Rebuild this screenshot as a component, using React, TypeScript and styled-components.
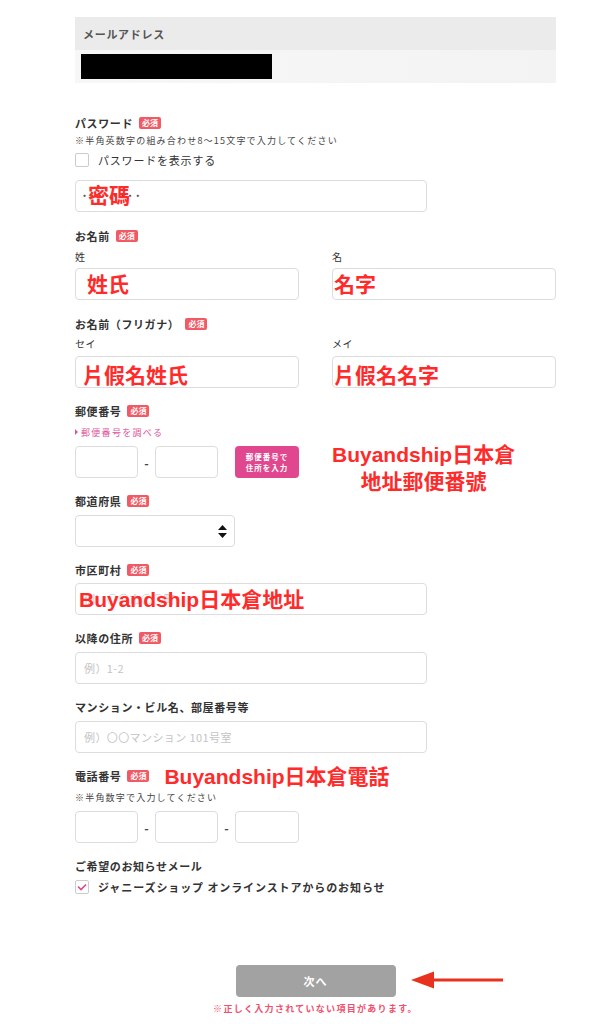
import styled, { createGlobalStyle } from 'styled-components';

const Global = createGlobalStyle`
    body {
        margin: 0;
        background: #ffffff;
        font-family: "Noto Sans CJK JP", "Noto Sans", sans-serif;
        color: #333333;
    }
    * { box-sizing: border-box; }
`;

const Page = styled.div`
    width: 481px;
    margin-left: 75px;
    padding: 17px 0 12px;
`;
const MailHead = styled.div`
    height: 33px;
    padding-left: 8px;
    display: flex;
    align-items: center;
    background: #ebebeb;
    font-size: 11px;
    font-weight: bold;
    letter-spacing: 0.7px;
    color: #555555;
`;
const MailBody = styled.div`
    height: 33px;
    padding: 4px 6px;
    background: linear-gradient(90deg, #f7f7f7, #f3f3f3);
`;
const Hidden = styled.div`
    width: 191px;
    height: 25px;
    background: #000000;
`;
const Field = styled.div<{ $mt: number }>`
    margin-top: ${(p) => p.$mt}px;
`;
const Label = styled.div`
    display: flex;
    align-items: center;
    gap: 6px;
    height: 14px;
    font-size: 11px;
    font-weight: bold;
    letter-spacing: 0.6px;
    color: #333333;
    white-space: nowrap;
`;
const Badge = styled.span`
    height: 12px;
    padding: 0 3px;
    border-radius: 2px;
    background: #ef5a64;
    color: #ffffff;
    font-size: 8px;
    line-height: 12px;
    letter-spacing: 0;
    font-weight: bold;
`;
const Note = styled.div<{ $mt: number }>`
    margin-top: ${(p) => p.$mt}px;
    height: 12px;
    font-size: 9px;
    line-height: 12px;
    letter-spacing: 1.2px;
    color: #444444;
`;
const CheckRow = styled.div<{ $mt: number; $bold?: boolean }>`
    margin-top: ${(p) => p.$mt}px;
    display: flex;
    align-items: center;
    gap: 9px;
    height: 14px;
    font-size: 11px;
    font-weight: ${(p) => (p.$bold ? 'bold' : 'normal')};
    letter-spacing: ${(p) => (p.$bold ? 0.9 : 0.8)}px;
    color: #333333;
`;
const CheckBox = styled.span`
    width: 14px;
    height: 14px;
    border: 1px solid #cccccc;
    border-radius: 2px;
    background: #ffffff;
    display: flex;
    align-items: center;
    justify-content: center;
`;
const Cols = styled.div<{ $mt: number }>`
    margin-top: ${(p) => p.$mt}px;
    display: flex;
    gap: 33px;
`;
const Col = styled.div`
    width: 224px;
`;
const SubLabel = styled.div`
    height: 12px;
    font-size: 10px;
    line-height: 12px;
    letter-spacing: 0.6px;
    color: #333333;
`;
const Box = styled.div<{ $w: number; $mt?: number }>`
    position: relative;
    width: ${(p) => p.$w}px;
    margin-top: ${(p) => p.$mt || 0}px;
    flex-shrink: 0;
`;
const Input = styled.input`
    display: block;
    width: 100%;
    height: 32px;
    padding: 0 8px;
    border: 1px solid #dddddd;
    border-radius: 4px;
    background: #ffffff;
    outline: 0;
    font-family: inherit;
    font-size: 11px;
    letter-spacing: 0.4px;
    color: #555555;
    &::placeholder {
        color: #c4c4c4;
    }
`;
const Anno = styled.span`
    color: #ff2b2b;
    font-family: "Liberation Sans", "Noto Sans CJK TC", sans-serif;
    font-weight: bold;
    font-size: 21px;
    line-height: 1;
    letter-spacing: 0;
    white-space: nowrap;
`;
const AnnoOver = styled(Anno)<{ $left: number; $top: number; $pad?: number; $bg?: boolean }>`
    position: absolute;
    left: ${(p) => p.$left}px;
    top: ${(p) => p.$top}px;
    padding-right: ${(p) => p.$pad || 0}px;
    background: ${(p) => (p.$bg ? '#ffffff' : 'transparent')};
    pointer-events: none;
`;
const AnnoBlock = styled(Anno)<{ $left: number; $top: number }>`
    position: absolute;
    left: ${(p) => p.$left}px;
    top: ${(p) => p.$top}px;
    text-align: center;
    line-height: 27px;
`;
const Dots = styled.span`
    position: absolute;
    left: 6px;
    top: 9px;
    font-size: 12px;
    font-weight: bold;
    letter-spacing: 0.5px;
    color: #555555;
    line-height: 1;
`;
const Row = styled.div<{ $mt: number }>`
    position: relative;
    margin-top: ${(p) => p.$mt}px;
    display: flex;
    align-items: center;
`;
const Dash = styled.span`
    width: 17px;
    text-align: center;
    font-size: 12px;
    font-weight: bold;
    color: #444444;
`;
const SearchLink = styled.div<{ $mt: number }>`
    margin-top: ${(p) => p.$mt}px;
    display: flex;
    align-items: center;
    gap: 3px;
    height: 12px;
    font-size: 9px;
    letter-spacing: 1.3px;
    color: #e0559b;
    &:before {
        content: '';
        border-left: 3px solid #e0559b;
        border-top: 3px solid transparent;
        border-bottom: 3px solid transparent;
    }
`;
const ZipButton = styled.button`
    margin-left: 17px;
    width: 64px;
    height: 32px;
    border: 0;
    border-radius: 4px;
    background: #e0478e;
    color: #ffffff;
    font-family: inherit;
    font-size: 7.5px;
    font-weight: bold;
    letter-spacing: 1px;
    line-height: 11px;
    padding: 0;
`;
const Select = styled.div<{ $mt: number }>`
    margin-top: ${(p) => p.$mt}px;
    width: 160px;
    height: 32px;
    border: 1px solid #dddddd;
    border-radius: 4px;
    display: flex;
    align-items: center;
    justify-content: flex-end;
    padding-right: 7px;
`;
const Footer = styled.div`
    margin-top: 71px;
    display: flex;
    flex-direction: column;
    align-items: center;
`;
const NextWrap = styled.div`
    position: relative;
`;
const NextButton = styled.button`
    width: 160px;
    height: 32px;
    border: 0;
    border-radius: 4px;
    background: #a2a2a2;
    color: #ffffff;
    font-family: inherit;
    font-size: 11px;
    font-weight: bold;
    letter-spacing: 1px;
`;
const Arrow = styled.svg`
    position: absolute;
    left: 175px;
    top: 5px;
`;
const ErrorText = styled.div`
    margin-top: 5px;
    font-size: 9px;
    font-weight: bold;
    letter-spacing: 1.3px;
    color: #f0506e;
`;

const Check = () => (
    <svg width="10" height="8" viewBox="0 0 10 8">
        <path d="M1 3.5 L4 6.5 L9 1.5" fill="none" stroke="#e0478e" strokeWidth="1.6" />
    </svg>
);

const App = () => {
    return (
        <>
            <Global />
            <Page>
                <MailHead>メールアドレス</MailHead>
                <MailBody>
                    <Hidden />
                </MailBody>

                <Field $mt={33}>
                    <Label>パスワード<Badge>必須</Badge></Label>
                    <Note $mt={5}>※半角英数字の組み合わせ8〜15文字で入力してください</Note>
                    <CheckRow $mt={6}><CheckBox />パスワードを表示する</CheckRow>
                    <Box $w={352} $mt={13}>
                        <Input />
                        <Dots>········</Dots>
                        <AnnoOver $left={13} $top={5}>密碼</AnnoOver>
                    </Box>
                </Field>

                <Field $mt={17}>
                    <Label>お名前<Badge>必須</Badge></Label>
                    <Cols $mt={8}>
                        <Col>
                            <SubLabel>姓</SubLabel>
                            <Box $w={224} $mt={5}>
                                <Input />
                                <AnnoOver $left={12} $top={6}>姓氏</AnnoOver>
                            </Box>
                        </Col>
                        <Col>
                            <SubLabel>名</SubLabel>
                            <Box $w={224} $mt={5}>
                                <Input />
                                <AnnoOver $left={2} $top={6}>名字</AnnoOver>
                            </Box>
                        </Col>
                    </Cols>
                </Field>

                <Field $mt={17}>
                    <Label>お名前（フリガナ）<Badge>必須</Badge></Label>
                    <Cols $mt={7}>
                        <Col>
                            <SubLabel>セイ</SubLabel>
                            <Box $w={224} $mt={6}>
                                <Input />
                                <AnnoOver $left={8} $top={9} $pad={12} $bg>片假名姓氏</AnnoOver>
                            </Box>
                        </Col>
                        <Col>
                            <SubLabel>メイ</SubLabel>
                            <Box $w={224} $mt={6}>
                                <Input />
                                <AnnoOver $left={2} $top={9} $pad={4} $bg>片假名名字</AnnoOver>
                            </Box>
                        </Col>
                    </Cols>
                </Field>

                <Field $mt={16}>
                    <Label>郵便番号<Badge>必須</Badge></Label>
                    <SearchLink $mt={8}>郵便番号を調べる</SearchLink>
                    <Row $mt={8}>
                        <Box $w={63}><Input /></Box>
                        <Dash>-</Dash>
                        <Box $w={63}><Input /></Box>
                        <ZipButton>郵便番号で<br />住所を入力</ZipButton>
                        <AnnoBlock $left={257} $top={-5}>Buyandship日本倉<br />地址郵便番號</AnnoBlock>
                    </Row>
                </Field>

                <Field $mt={16}>
                    <Label>都道府県<Badge>必須</Badge></Label>
                    <Select $mt={7}>
                        <svg width="9" height="13" viewBox="0 0 9 13">
                            <path d="M4.5 0 L9 5 L0 5 Z M0 8 L9 8 L4.5 13 Z" fill="#111111" />
                        </svg>
                    </Select>
                </Field>

                <Field $mt={16}>
                    <Label>市区町村<Badge>必須</Badge></Label>
                    <Box $w={352} $mt={6}>
                        <Input placeholder="例）○○市○○町" />
                        <AnnoOver $left={4} $top={6}>Buyandship日本倉地址</AnnoOver>
                    </Box>
                </Field>

                <Field $mt={16}>
                    <Label>以降の住所<Badge>必須</Badge></Label>
                    <Box $w={352} $mt={7}>
                        <Input placeholder="例）1-2" />
                    </Box>
                </Field>

                <Field $mt={16}>
                    <Label>マンション・ビル名、部屋番号等</Label>
                    <Box $w={352} $mt={7}>
                        <Input placeholder="例）〇〇マンション 101号室" />
                    </Box>
                </Field>

                <Field $mt={16}>
                    <Label>電話番号<Badge>必須</Badge><Anno style={{ marginLeft: 9 }}>Buyandship日本倉電話</Anno></Label>
                    <Note $mt={9}>※半角数字で入力してください</Note>
                    <Row $mt={7}>
                        <Box $w={63}><Input /></Box>
                        <Dash>-</Dash>
                        <Box $w={63}><Input /></Box>
                        <Dash>-</Dash>
                        <Box $w={64}><Input /></Box>
                    </Row>
                </Field>

                <Field $mt={16}>
                    <Label>ご希望のお知らせメール</Label>
                    <CheckRow $mt={7} $bold>
                        <CheckBox><Check /></CheckBox>
                        ジャニーズショップ オンラインストアからのお知らせ
                    </CheckRow>
                </Field>

                <Footer>
                    <NextWrap>
                        <NextButton>次へ</NextButton>
                        <Arrow width="92" height="20" viewBox="0 0 92 20">
                            <path d="M92 10 L20 10" stroke="#e8321e" strokeWidth="3" />
                            <path d="M0 10 L23 1.5 L23 18.5 Z" fill="#e8321e" />
                        </Arrow>
                    </NextWrap>
                    <ErrorText>※正しく入力されていない項目があります。</ErrorText>
                </Footer>
            </Page>
        </>
    );
};

export default App;
